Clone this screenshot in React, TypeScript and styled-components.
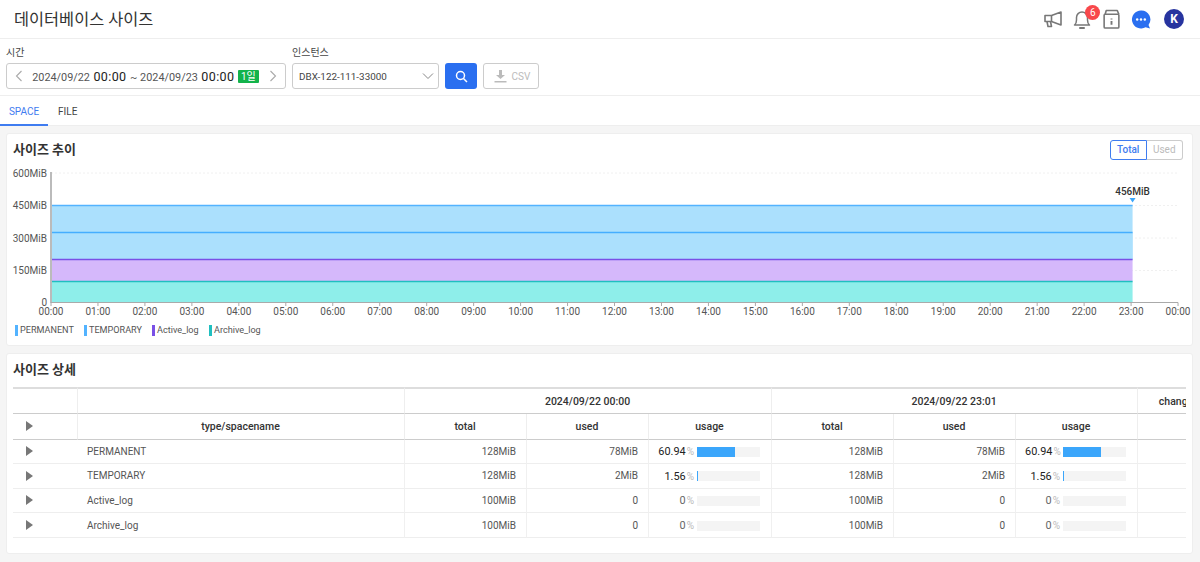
import React from "react";
import styled, { createGlobalStyle } from "styled-components";

const Global = createGlobalStyle`
  html, body { margin: 0; padding: 0; }
  body { font-family: Roboto, "Noto Sans CJK KR", sans-serif; color: #333; background: #f5f5f5; }
  * { box-sizing: border-box; }
`;

const Page = styled.div`
  width: 1200px;
  height: 562px;
  overflow: hidden;
  background: #f5f5f5;
  display: flex;
  flex-direction: column;
`;

const Header = styled.header`
  height: 39px;
  flex: none;
  background: #fff;
  border-bottom: 1px solid #eee;
  display: flex;
  align-items: center;
  justify-content: space-between;
  padding: 0 16px 2px 14px;
`;

const Title = styled.h1`
  margin: 0;
  font-size: 16.35px;
  font-weight: 400;
  color: #333;
`;

const HeaderIcons = styled.div`
  display: flex;
  align-items: center;
  gap: 9.4px;
  padding-top: 2px;
`;

const IconSlot = styled.span`
  position: relative;
  width: 20px;
  height: 20px;
  display: flex;
  align-items: center;
  justify-content: center;
`;

const Badge = styled.span`
  position: absolute;
  top: -4px;
  right: -8px;
  width: 15px;
  height: 15px;
  border-radius: 50%;
  background: #f8484b;
  color: #fff;
  font-size: 10px;
  line-height: 15px;
  text-align: center;
`;

const Avatar = styled.span`
  width: 20px;
  height: 20px;
  margin-left: 3.5px;
  border-radius: 50%;
  background: #27349f;
  color: #fff;
  font-size: 12px;
  font-weight: 700;
  line-height: 20px;
  text-align: center;
`;

const FilterBar = styled.section`
  height: 57px;
  flex: none;
  background: #fff;
  border-bottom: 1px solid #eee;
  display: flex;
  align-items: flex-end;
  gap: 6px;
  padding: 0 6px 6px;
`;

const Field = styled.div`
  display: flex;
  flex-direction: column;
  gap: 3px;
`;

const FieldLabel = styled.label`
  font-size: 10px;
  line-height: 15px;
  color: #444;
`;

const DateBox = styled.div`
  width: 280px;
  height: 26px;
  border: 1px solid #ccc;
  border-radius: 3px;
  display: flex;
  align-items: center;
  justify-content: space-between;
  padding: 0 8px;
`;

const DateText = styled.span`
  font-size: 10.85px;
  color: #555;
  display: flex;
  align-items: baseline;
  gap: 3.5px;
  white-space: nowrap;
  margin-left: -1px;
`;

const Time = styled.b`
  font-size: 12.5px;
  font-weight: 400;
  letter-spacing: 0.4px;
  color: #222;
`;

const DayTag = styled.span`
  background: #13b34b;
  color: #fff;
  font-size: 10px;
  line-height: 13px;
  padding: 0 3px;
  border-radius: 1px;
  align-self: center;
`;

const SelectBox = styled.div`
  width: 147px;
  height: 26px;
  border: 1px solid #ccc;
  border-radius: 3px;
  display: flex;
  align-items: center;
  justify-content: space-between;
  padding: 0 4px 0 6px;
  font-size: 9.9px;
  color: #444;
`;

const SearchButton = styled.button`
  width: 32px;
  height: 26px;
  border: 0;
  padding: 0;
  border-radius: 3px;
  background: #2a6ff0;
  display: flex;
  align-items: center;
  justify-content: center;
`;

const CsvButton = styled.button`
  width: 56px;
  height: 26px;
  border: 1px solid #ccc;
  border-radius: 3px;
  background: #fff;
  color: #bbb;
  font-family: inherit;
  font-size: 10px;
  display: flex;
  align-items: center;
  justify-content: center;
  gap: 5px;
  padding: 0 0 0 2px;
`;

const Tabs = styled.nav`
  height: 30px;
  flex: none;
  background: #fff;
  border-bottom: 1px solid #eee;
  display: flex;
`;

const Tab = styled.div<{ $active?: boolean }>`
  width: ${(p) => (p.$active ? 48 : 38)}px;
  padding-left: ${(p) => (p.$active ? 0 : 10)}px;
  text-align: ${(p) => (p.$active ? "center" : "left")};
  height: 30px;
  font-size: 10px;
  line-height: 31px;
  color: ${(p) => (p.$active ? "#3f7cf0" : "#444")};
  border-bottom: ${(p) => (p.$active ? "2px solid #3f7cf0" : "none")};
`;

const Content = styled.main`
  flex: 1;
  padding: 7px 7px 0 6px;
  display: flex;
  flex-direction: column;
  gap: 7px;
`;

const Card = styled.section<{ $height: number }>`
  height: ${(p) => p.$height}px;
  background: #fff;
  border: 1px solid #eee;
  border-radius: 3px;
  padding: 6px 6px 0;
  overflow: hidden;
`;

const CardHead = styled.div`
  display: flex;
  align-items: flex-start;
  justify-content: space-between;
  height: 25px;
`;

const CardTitle = styled.h2`
  margin: 0;
  font-size: 13px;
  line-height: 20px;
  font-weight: 700;
  color: #333;
`;

const Toggle = styled.div`
  display: flex;
  margin-right: 3px;
`;

const ToggleItem = styled.div<{ $active?: boolean }>`
  width: 36.5px;
  height: 20px;
  text-align: center;
  font-size: 10px;
  line-height: 18px;
  font-weight: ${(p) => (p.$active ? 500 : 400)};
  color: ${(p) => (p.$active ? "#3f7cf0" : "#bbb")};
  border: 1px solid ${(p) => (p.$active ? "#3f7cf0" : "#ccc")};
  border-radius: ${(p) => (p.$active ? "3px 0 0 3px" : "0 3px 3px 0")};
  ${(p) => (p.$active ? "" : "border-left: none;")}
`;

const ChartWrap = styled.div`
  margin: 0 -6px;
  height: 158px;
`;

const Legend = styled.div`
  display: flex;
  padding-left: 2px;
  height: 14px;
  align-items: center;
`;

const LegendItem = styled.span<{ $color: string; $width: number }>`
  width: ${(p) => p.$width}px;
  font-size: 9.1px;
  color: #555;
  display: flex;
  align-items: center;
  gap: 2px;
  &::before {
    content: "";
    width: 3px;
    height: 11px;
    background: ${(p) => p.$color};
  }
`;

const TableClip = styled.div`
  width: 1173px;
  overflow: hidden;
  margin-top: 2px;
`;

const Table = styled.table`
  width: 1202.5px;
  table-layout: fixed;
  border-collapse: separate;
  border-spacing: 0;
  font-size: 10.5px;
`;

const Th = styled.th<{ $top?: boolean }>`
  height: ${(p) => (p.$top ? 27 : 25.5)}px;
  padding: 0;
  font-size: 10.5px;
  font-weight: 500;
  color: #333;
  border-top: ${(p) => (p.$top ? "2px solid #ddd" : "none")};
  border-bottom: 1px solid #ccc;
  border-right: 1px solid #eee;
  white-space: nowrap;
  overflow: hidden;
  background: #fff;
`;

const ExpandHead = styled(Th)`
  padding-left: 13px;
  text-align: left;
`;

const Td = styled.td<{ $align?: string }>`
  height: 24.6px;
  padding: 0 9.5px;
  font-size: 10px;
  color: #555;
  text-align: ${(p) => p.$align || "left"};
  border-bottom: 1px solid #eee;
  border-right: 1px solid #f0f0f0;
  white-space: nowrap;
`;

const ExpandCell = styled(Td)`
  padding: 0 0 0 13px;
  border-right: none;
`;

const Arrow = styled.span`
  display: block;
  width: 0;
  height: 0;
  border-style: solid;
  border-width: 5px 0 5px 7px;
  border-color: transparent transparent transparent #777;
`;

const UsageCell = styled.div`
  display: flex;
  align-items: center;
  justify-content: flex-end;
  margin: 1px 1.5px 0 0;
`;

const UsageValue = styled.span<{ $zero?: boolean }>`
  font-size: 10.9px;
  font-weight: 400;
  color: ${(p) => (p.$zero ? "#666" : "#222")};
`;

const Percent = styled.span`
  font-size: 10px;
  color: #bbb;
  margin: 0 2.5px 0 1px;
`;

const Track = styled.span`
  width: 63px;
  height: 10px;
  background: #f4f4f4;
  display: block;
`;

const Fill = styled.span`
  display: block;
  height: 10px;
  background: #3ba6fb;
`;

const hours = Array.from({ length: 25 }, (_, i) => i);
const hourX = (i: number) => 44 + i * 46.96;
const top = (y: number) => y - 165;

function SizeChart() {
  const end = hourX(23) + 1.5;
  const x0 = 44;
  const bands = [
    { y: 205.5, h: 54, fill: "#abe0fd", line: "#53b3ff" },
    { y: 232.5, h: 27, fill: "#abe0fd", line: "#45aeff" },
    { y: 259.5, h: 22, fill: "#d5b8fb", line: "#7a50e6" },
    { y: 281.5, h: 21, fill: "#8eeeea", line: "#20bfc0" },
  ];
  const yTicks = [
    ["600MiB", 173],
    ["450MiB", 205.5],
    ["300MiB", 238],
    ["150MiB", 270.5],
    ["0", 302.5],
  ] as const;
  return (
    <svg width="1185" height="158" style={{ display: "block" }}>
      {yTicks.slice(0, 4).map(([l, y]) => (
        <line key={l} x1={x0} x2={1171} y1={top(y)} y2={top(y)} stroke="#f0f0f0" strokeDasharray="2 2" />
      ))}
      {bands.map((b) => (
        <g key={b.y}>
          <rect x={x0} y={top(b.y)} width={end - x0} height={b.h} fill={b.fill} />
          <line x1={x0} x2={end} y1={top(b.y)} y2={top(b.y)} stroke={b.line} strokeWidth="1.4" />
        </g>
      ))}
      <line x1={x0} x2={x0} y1={top(172)} y2={top(303)} stroke="#bbb" strokeWidth="2" />
      <line x1={x0} x2={1171} y1={top(302.5)} y2={top(302.5)} stroke="#aaa" />
      {yTicks.map(([l, y]) => (
        <text key={l} x={40} y={top(y) + 3.5} textAnchor="end" fontSize="10" fill="#555" fontFamily="Roboto">
          {l}
        </text>
      ))}
      {hours.map((i) => (
        <g key={i}>
          <line x1={hourX(i)} x2={hourX(i)} y1={top(302.5)} y2={top(306)} stroke="#aaa" />
          <text x={hourX(i)} y={top(315)} textAnchor="middle" fontSize="10" fill="#555" fontFamily="Roboto">
            {i === 24 ? "00:00" : `${String(i).padStart(2, "0")}:00`}
          </text>
        </g>
      ))}
      <text x={end} y={top(194.5)} textAnchor="middle" fontSize="10" fontWeight="500" fill="#333" fontFamily="Roboto">
        456MiB
      </text>
      <polygon points={`${end - 3},${top(198)} ${end + 3},${top(198)} ${end},${top(202.5)}`} fill="#3ba6fb" />
    </svg>
  );
}

const rows = [
  { name: "PERMANENT", total: "128MiB", used: "78MiB", pct: "60.94", width: 60.94 },
  { name: "TEMPORARY", total: "128MiB", used: "2MiB", pct: "1.56", width: 1.56 },
  { name: "Active_log", total: "100MiB", used: "0", pct: "0", width: 0 },
  { name: "Archive_log", total: "100MiB", used: "0", pct: "0", width: 0 },
];

function Usage({ pct, width }: { pct: string; width: number }) {
  return (
    <UsageCell>
      <UsageValue $zero={pct === "0"}>{pct}</UsageValue>
      <Percent>%</Percent>
      <Track>
        <Fill style={{ width: `${width}%` }} />
      </Track>
    </UsageCell>
  );
}

export default function App() {
  return (
    <Page>
      <Global />
      <Header>
        <Title>데이터베이스 사이즈</Title>
        <HeaderIcons>
          <IconSlot>
            <svg width="20" height="20" viewBox="0 0 20 20" fill="none" stroke="#777" strokeWidth="1.6" strokeLinejoin="round">
              <path d="M2 6.500h6.500L18 3v13l-9.500-3.500H2z" />
              <path d="M8.500 6.500v6M4 12.500l1 5h3.500l-1-5" />
            </svg>
          </IconSlot>
          <IconSlot>
            <svg width="20" height="21" viewBox="0 0 20 20" fill="none" stroke="#777" strokeWidth="1.5" strokeLinejoin="round">
              <path d="M2.500 15.500c1.500-1 2-2.500 2-5V8a5.500 5.500 0 0 1 11 0v2.500c0 2.500.5 4 2 5z" />
              <path d="M8 18.500h4" strokeLinecap="round" strokeWidth="2" />
            </svg>
            <Badge>6</Badge>
          </IconSlot>
          <IconSlot>
            <svg width="19" height="20" viewBox="0 0 18 19" fill="none" stroke="#777" strokeWidth="1.5" strokeLinejoin="round">
              <rect x="2" y="5" width="14" height="13" rx="1" />
              <path d="M3 5l1-3.500h10.500L16 5" />
              <path d="M9 9v1M9 11.500V15" strokeWidth="1.800" />
            </svg>
          </IconSlot>
          <IconSlot>
            <svg width="21" height="21" viewBox="0 0 21 21">
              <path d="M10.500 1a9.500 9.500 0 1 0 4.800 17.700l4.700 1.300-1.600-3.800A9.500 9.500 0 0 0 10.500 1z" fill="#2a6ff0" />
              <circle cx="6.500" cy="10.500" r="1.300" fill="#fff" />
              <circle cx="10.500" cy="10.500" r="1.300" fill="#fff" />
              <circle cx="14.500" cy="10.500" r="1.300" fill="#fff" />
            </svg>
          </IconSlot>
          <Avatar>K</Avatar>
        </HeaderIcons>
      </Header>

      <FilterBar>
        <Field>
          <FieldLabel>시간</FieldLabel>
          <DateBox>
            <svg width="8" height="12" viewBox="0 0 8 12" fill="none" stroke="#aaa" strokeWidth="1.100">
              <path d="M6.500 1L1.500 6l5 5" />
            </svg>
            <DateText>
              2024/09/22 <Time>00:00</Time> ~ 2024/09/23 <Time>00:00</Time>
              <DayTag>1일</DayTag>
            </DateText>
            <svg width="8" height="12" viewBox="0 0 8 12" fill="none" stroke="#aaa" strokeWidth="1.100">
              <path d="M1.500 1l5 5-5 5" />
            </svg>
          </DateBox>
        </Field>
        <Field>
          <FieldLabel>인스턴스</FieldLabel>
          <SelectBox>
            DBX-122-111-33000
            <svg width="12" height="8" viewBox="0 0 12 8" fill="none" stroke="#888" strokeWidth="1">
              <path d="M1 1.500l5 5 5-5" />
            </svg>
          </SelectBox>
        </Field>
        <SearchButton aria-label="search">
          <svg width="13" height="13" viewBox="0 0 13 13" fill="none" stroke="#fff" strokeWidth="1.500">
            <circle cx="5.500" cy="5.500" r="4" />
            <path d="M8.500 8.500l3.500 3.500" />
          </svg>
        </SearchButton>
        <CsvButton>
          <svg width="13" height="14" viewBox="0 0 13 14" fill="#bbb">
            <path d="M5 1h3v5h3L6.500 10 2 6h3zM.5 12h12v1.500H.5z" />
          </svg>
          CSV
        </CsvButton>
      </FilterBar>

      <Tabs>
        <Tab $active>SPACE</Tab>
        <Tab>FILE</Tab>
      </Tabs>

      <Content>
        <Card $height={213}>
          <CardHead>
            <CardTitle>사이즈 추이</CardTitle>
            <Toggle>
              <ToggleItem $active>Total</ToggleItem>
              <ToggleItem>Used</ToggleItem>
            </Toggle>
          </CardHead>
          <ChartWrap>
            <SizeChart />
          </ChartWrap>
          <Legend>
            <LegendItem $color="#53b3ff" $width={69}>PERMANENT</LegendItem>
            <LegendItem $color="#53b3ff" $width={68}>TEMPORARY</LegendItem>
            <LegendItem $color="#7a50e6" $width={57}>Active_log</LegendItem>
            <LegendItem $color="#20bfc0" $width={60}>Archive_log</LegendItem>
          </Legend>
        </Card>

        <Card $height={201}>
          <CardHead>
            <CardTitle>사이즈 상세</CardTitle>
          </CardHead>
          <TableClip>
            <Table>
              <colgroup>
                <col width="64.5" />
                <col width="327" />
                <col width="122" />
                <col width="122" />
                <col width="123" />
                <col width="122" />
                <col width="122" />
                <col width="122" />
                <col width="78" />
              </colgroup>
              <thead>
                <tr>
                  <Th $top />
                  <Th $top />
                  <Th $top colSpan={3}>2024/09/22 00:00</Th>
                  <Th $top colSpan={3}>2024/09/22 23:01</Th>
                  <Th $top>change</Th>
                </tr>
                <tr>
                  <ExpandHead><Arrow /></ExpandHead>
                  <Th>type/spacename</Th>
                  <Th>total</Th>
                  <Th>used</Th>
                  <Th>usage</Th>
                  <Th>total</Th>
                  <Th>used</Th>
                  <Th>usage</Th>
                  <Th />
                </tr>
              </thead>
              <tbody>
                {rows.map((r) => (
                  <tr key={r.name}>
                    <ExpandCell><Arrow /></ExpandCell>
                    <Td>{r.name}</Td>
                    <Td $align="right">{r.total}</Td>
                    <Td $align="right">{r.used}</Td>
                    <Td $align="right"><Usage pct={r.pct} width={r.width} /></Td>
                    <Td $align="right">{r.total}</Td>
                    <Td $align="right">{r.used}</Td>
                    <Td $align="right"><Usage pct={r.pct} width={r.width} /></Td>
                    <Td />
                  </tr>
                ))}
              </tbody>
            </Table>
          </TableClip>
        </Card>
      </Content>
    </Page>
  );
}
